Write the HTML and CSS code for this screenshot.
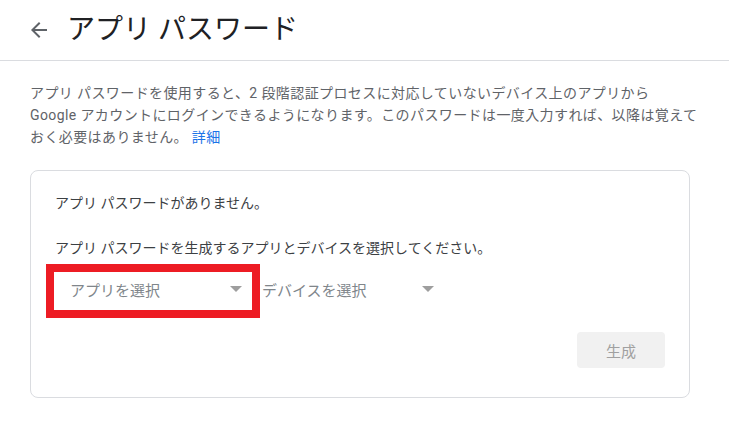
FILE: index.html
```html
<!DOCTYPE html>
<html lang="ja">
<head>
    <meta charset="UTF-8">
    <meta name="viewport" content="width=device-width, initial-scale=1.0">
    <title>アプリ パスワード</title>
    <link rel="stylesheet" href="styles.css">
</head>
<body>
    <header class="header">
        <a class="back" href="#" aria-label="戻る">
            <svg width="24" height="24" viewBox="0 0 24 24"><path d="M20 11H7.83l5.59-5.59L12 4l-8 8 8 8 1.41-1.41L7.83 13H20v-2z" fill="#5f6368"/></svg>
        </a>
        <h1 class="title">アプリ パスワード</h1>
    </header>

    <main class="content">
        <p class="intro">アプリ パスワードを使用すると、2 段階認証プロセスに対応していないデバイス上のアプリから<br>Google アカウントにログインできるようになります。このパスワードは一度入力すれば、以降は覚えて<br>おく必要はありません。 <a href="#" class="link">詳細</a></p>

        <div class="card">
            <p class="card-text">アプリ パスワードがありません。</p>
            <p class="card-text spaced">アプリ パスワードを生成するアプリとデバイスを選択してください。</p>

            <div class="selects">
                <div class="select highlighted">
                    <span>アプリを選択</span>
                    <span class="caret"></span>
                    <span class="highlight"></span>
                </div>
                <div class="select">
                    <span>デバイスを選択</span>
                    <span class="caret"></span>
                </div>
            </div>

            <div class="actions">
                <button class="generate" disabled>生成</button>
            </div>
        </div>
    </main>
</body>
</html>
```

FILE: styles.css
```css
body {
    margin: 0;
    font-family: Roboto, "Noto Sans CJK JP", sans-serif;
    background: #fff;
    color: #202124;
}
.header {
    display: flex;
    align-items: center;
    height: 60px;
    padding-left: 27px;
    border-bottom: 1px solid #dadce0;
}
.back {
    display: flex;
    width: 24px;
    height: 24px;
}
.title {
    margin: 0 0 0 16px;
    font-size: 28px;
    font-weight: 400;
    color: #202124;
    line-height: 36px;
}
.content {
    padding: 0 30px;
}
.intro {
    margin: 21px 0 0;
    font-size: 14px;
    line-height: 22px;
    letter-spacing: 0.4px;
    color: #5f6368;
}
.link {
    color: #1a73e8;
    text-decoration: none;
}
.card {
    margin-top: 22px;
    width: 660px;
    box-sizing: border-box;
    border: 1px solid #dadce0;
    border-radius: 8px;
    padding: 22px 24px 29px 24px;
}
.card-text {
    margin: 0;
    font-size: 14px;
    line-height: 20px;
    color: #3c4043;
}
.card-text.spaced {
    margin-top: 25px;
}
.selects {
    display: flex;
    margin-top: 14px;
    margin-left: -1px;
}
.select {
    position: relative;
    display: flex;
    align-items: center;
    justify-content: space-between;
    width: 192px;
    height: 36px;
    box-sizing: border-box;
    padding: 0 4px 2px 16px;
    margin-bottom: 2px;
    font-size: 15px;
    color: #80868b;
}
.caret {
    width: 0;
    height: 0;
    border-left: 6px solid transparent;
    border-right: 6px solid transparent;
    border-top: 6px solid #9e9e9e;
}
.highlight {
    position: absolute;
    left: -8px;
    top: -8px;
    width: 214px;
    height: 54px;
    box-sizing: border-box;
    border: 8px solid #ed1c24;
}
.actions {
    display: flex;
    justify-content: flex-end;
    margin-top: 22px;
}
.generate {
    width: 88px;
    height: 36px;
    border: none;
    border-radius: 4px;
    background: #f1f1f1;
    color: #a0a0a0;
    font-family: inherit;
    font-size: 15px;
}
```
